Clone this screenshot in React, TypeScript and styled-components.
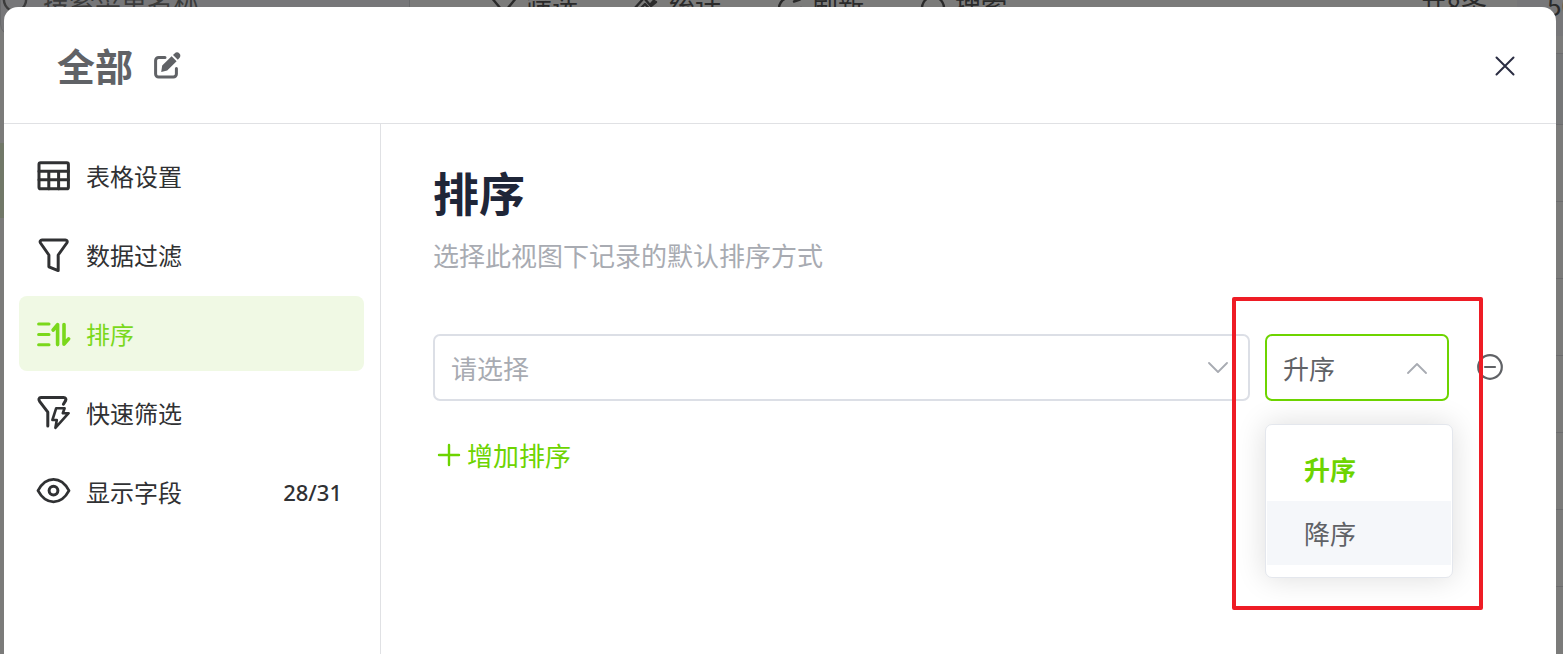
import React from "react";
import styled, { createGlobalStyle } from "styled-components";

const color = {
  green: "#6dd400",
  activeGreen: "#7ad81b",
  activeBg: "#f0f9e4",
  ink: "#303133",
  text: "#606266",
  heading: "#1f2638",
  muted: "#a8abb2",
  field: "#dcdfe6",
  line: "#e0e1e4",
};

const GlobalStyle = createGlobalStyle`
  * { box-sizing: border-box; }
  body {
    margin: 0;
    font-family: "Noto Sans CJK SC", sans-serif;
    color: ${color.text};
  }
  button, input, select { font: inherit; color: inherit; }
  button { padding: 0; border: 0; background: none; cursor: pointer; }
  h1, h2, p, ul { margin: 0; padding: 0; }
  ul { list-style: none; }
`;

const Screen = styled.div`
  position: relative;
  height: 100vh;
  overflow: hidden;
  background: #f7f6f5;
`;

/* The list page under the dialog, scrolled so that its toolbar is cut off */
const ListPage = styled.div`
  display: grid;
  grid-template-columns: 430px 1fr;
  margin-top: -36px;
  font-size: 26px;
`;

const MenuColumn = styled.aside`
  display: flex;
  flex-direction: column;
  padding-right: 20px;
`;

const SearchBox = styled.label`
  display: flex;
  align-items: center;
  gap: 14px;
  height: 72px;
  border: 1px solid #d0d2d6;
  border-radius: 12px;
  background: #eeeff2;
  color: #777;
  svg { flex: none; }
  input {
    flex: 1;
    min-width: 0;
    border: 0;
    padding: 0;
    background: none;
    &::placeholder { color: #777; opacity: 1; }
  }
`;

const CurrentMenu = styled.div`
  height: 75px;
  margin-top: 107px;
  background: #e2f1d0;
`;

const ListColumn = styled.div`
  min-width: 0;
`;

const Toolbar = styled.div`
  display: flex;
  align-items: center;
  height: 72px;
  margin-bottom: 17px;
  padding: 8px 0 0 60px;
  color: #555;
`;

const Tool = styled.button`
  display: flex;
  align-items: center;
  gap: 8px;
  width: 143px;
  svg { margin-top: 8px; }
`;

const Total = styled.span`
  margin-left: auto;
  margin-right: 30px;
`;

const PageSize = styled.button`
  width: 46px;
  height: 64px;
  padding-left: 30px;
  background: #eeeff2;
  text-align: left;
`;

const ListRow = styled.div<{ $head?: boolean }>`
  height: ${(p) => (p.$head ? 71 : 77)}px;
  border-top: 1px solid #d8d9dc;
  background: ${(p) => (p.$head ? "#eceef0" : "transparent")};
`;

const Overlay = styled.div`
  position: absolute;
  inset: 0;
  display: flex;
  padding: 7px 7px 0 4px;
  background: rgba(0, 0, 0, 0.5);
`;

const Dialog = styled.section`
  flex: 1;
  display: flex;
  flex-direction: column;
  min-width: 0;
  border-radius: 14px 14px 0 0;
  background: #fff;
`;

const Header = styled.header`
  display: flex;
  align-items: center;
  justify-content: space-between;
  height: 117px;
  padding: 0 39px 0 53px;
  border-bottom: 1px solid ${color.line};
`;

const TitleGroup = styled.div`
  display: flex;
  align-items: center;
  gap: 20px;
`;

const Title = styled.h1`
  font-size: 38px;
  line-height: 56px;
  font-weight: 700;
`;

const IconButton = styled.button`
  display: flex;
  flex: none;
`;

const Body = styled.div`
  flex: 1;
  display: flex;
`;

const Sidebar = styled.nav`
  flex: none;
  display: flex;
  flex-direction: column;
  gap: 4px;
  width: 377px;
  padding: 14px 16px 0 15px;
  border-right: 1px solid ${color.line};
`;

const NavItem = styled.button<{ $active?: boolean }>`
  display: flex;
  align-items: center;
  gap: 15px;
  height: 75px;
  padding: 0 22px 0 17px;
  border-radius: 8px;
  background: ${(p) => (p.$active ? color.activeBg : "transparent")};
  color: ${(p) => (p.$active ? color.activeGreen : color.ink)};
  font-size: 24px;
  line-height: 36px;
  svg { flex: none; }
`;

const Count = styled.span`
  margin-left: auto;
  font-family: "Noto Sans", "Noto Sans CJK SC", sans-serif;
  font-size: 22px;
  font-weight: 500;
`;

const Main = styled.main`
  flex: 1;
  min-width: 0;
  padding: 37px 53px 40px 52px;
  font-size: 26px;
`;

const Heading = styled.h2`
  color: ${color.heading};
  font-size: 46px;
  line-height: 60px;
  font-weight: 700;
`;

const Description = styled.p`
  margin-top: 16px;
  color: ${color.muted};
  line-height: 36px;
`;

const SortRow = styled.div`
  display: flex;
  align-items: center;
  margin-top: 61px;
`;

const Field = styled.div<{ $narrow?: boolean }>`
  position: relative;
  flex: ${(p) => (p.$narrow ? "0 0 184px" : "1 1 0")};
  margin-right: ${(p) => (p.$narrow ? 28 : 15)}px;
`;

const Select = styled.select<{ $open?: boolean }>`
  display: block;
  appearance: none;
  width: 100%;
  height: 67px;
  padding: 0 56px 0 16px;
  border: 2px solid ${(p) => (p.$open ? color.green : color.field)};
  border-radius: 7px;
  background: #fff;
  color: ${(p) => (p.$open ? color.text : color.muted)};
  outline: none;
`;

const Arrow = styled.svg<{ $up?: boolean }>`
  position: absolute;
  right: 22px;
  top: 28px;
  transform: ${(p) => (p.$up ? "rotate(180deg)" : "none")};
  pointer-events: none;
`;

const Options = styled.ul`
  position: absolute;
  top: 90px;
  left: 0;
  width: 188px;
  padding: 12px 1px;
  border: 1px solid #e4e7ed;
  border-radius: 7px;
  background: #fff;
  box-shadow: 0 0 30px rgba(0, 0, 0, 0.14);
`;

const Option = styled.li<{ $selected?: boolean }>`
  padding-left: 37px;
  line-height: 64px;
  background: ${(p) => (p.$selected ? "transparent" : "#f5f7fa")};
  color: ${(p) => (p.$selected ? color.green : color.text)};
  font-weight: ${(p) => (p.$selected ? 700 : 400)};
`;

const Highlight = styled.div`
  position: absolute;
  z-index: 1;
  top: -37px;
  left: -33px;
  width: 251px;
  height: 313px;
  border: 4px solid #ee1c25;
  border-radius: 2px;
  pointer-events: none;
`;

const AddButton = styled.button`
  display: flex;
  align-items: center;
  gap: 6px;
  margin-top: 34px;
  padding-left: 4px;
  color: ${color.green};
  line-height: 40px;
`;

const stroke = {
  fill: "none",
  stroke: "currentColor",
  strokeLinecap: "round" as const,
  strokeLinejoin: "round" as const,
  "aria-hidden": true,
};

const NavIcon = ({ children }: { children: React.ReactNode }) => (
  <svg width="35" height="36" viewBox="0 0 35 36" strokeWidth="3" {...stroke}>
    {children}
  </svg>
);

const ToolIcon = ({ d }: { d: string }) => (
  <svg width="28" height="28" viewBox="0 0 28 28" strokeWidth="2.4" {...stroke}>
    <path d={d} />
  </svg>
);

const circle = "M14 3a11 11 0 1 0 0.01 0";

const tools = [
  { label: "筛选", d: "M1 3h26L17 15v11l-6-3v-8z" },
  { label: "统计", d: "M1 15 11 4l6 7 6-7M6 16l6-6 8 9M18 12l5-4" },
  { label: "刷新", d: "M3 16A11 11 0 0 1 11 4M18 7.500l6-2M25 14a11 11 0 0 1-18 8" },
  { label: "搜索", d: circle },
];

const navItems = [
  {
    label: "表格设置",
    icon: (
      <>
        <rect x="3" y="4.8" width="29.4" height="26" rx="1.6" />
        <path d="M3 13.3h29.4M3 21.8h29.4M12.8 13.3V30.8M22.6 13.3V30.8" />
      </>
    ),
  },
  {
    label: "数据过滤",
    icon: (
      <path d="M6 3h23.4c1.6 0 2.3 1.6 1.4 3L22.200 18v15.600L12.900 29.800V18L4.500 6c-.9-1.4 0-3 1.500-3z" />
    ),
  },
  {
    label: "排序",
    active: true,
    icon: (
      <>
        <path d="M2.600 8h10.400M2.600 18.400h10.400M2.600 28.800h10.400" />
        <path
          strokeWidth="3.600"
          d="M17.200 14 21.600 8.600V28.600M28 8.600V28.200L32.600 22.800"
        />
      </>
    ),
  },
  {
    label: "快速筛选",
    icon: (
      <>
        <path d="M11.800 31V17.200L3.600 6.400c-1.400-1.900-.6-4 1.400-4h22.600c2 0 2.800 1.600 2 3.200L27.400 9.200" />
        <path
          strokeWidth="2.600"
          d="M20.200 13.200h8.400L26.800 18.200h5.800L19.400 32.800l1.400-7.800h-4.400z"
        />
      </>
    ),
  },
  {
    label: "显示字段",
    count: "28/31",
    icon: (
      <>
        <path
          strokeWidth="2.800"
          d="M2 16.600C6 9.200 11.400 5.400 17.500 5.400S29 9.200 33 16.600C29 24 23.600 27.800 17.500 27.800S6 24 2 16.600z"
        />
        <circle cx="17.500" cy="16.600" r="4.400" />
      </>
    ),
  },
];

const SelectArrow = ({ up }: { up?: boolean }) => (
  <Arrow
    $up={up}
    width="20"
    height="12"
    viewBox="0 0 20 12"
    strokeWidth="1.8"
    {...stroke}
    stroke={color.muted}
  >
    <path d="M1 1 10 10 19 1" />
  </Arrow>
);

export default function App() {
  return (
    <>
      <GlobalStyle />
      <Screen>
        <ListPage inert>
          <MenuColumn>
            <SearchBox>
              <ToolIcon d={circle} />
              <input aria-label="搜索菜单名称" placeholder="搜索菜单名称" />
            </SearchBox>
            <CurrentMenu />
          </MenuColumn>
          <ListColumn>
            <Toolbar>
              {tools.map((t) => (
                <Tool key={t.label}>
                  <ToolIcon d={t.d} />
                  {t.label}
                </Tool>
              ))}
              <Total>共8条</Total>
              <PageSize>50</PageSize>
            </Toolbar>
            <ListRow $head />
            {[1, 2, 3, 4, 5, 6, 7, 8].map((n) => (
              <ListRow key={n} />
            ))}
          </ListColumn>
        </ListPage>

        <Overlay>
          <Dialog role="dialog" aria-labelledby="view-title">
            <Header>
              <TitleGroup>
                <Title id="view-title">全部</Title>
                <IconButton aria-label="编辑">
                  <svg width="28" height="28" viewBox="0 0 28 28" aria-hidden>
                    <path
                      d="M12 6.400H5.600A3 3 0 0 0 2.600 9.400V23A3 3 0 0 0 5.600 26H20.400A3 3 0 0 0 23.400 23V17.400"
                      fill="none"
                      stroke="currentColor"
                      strokeWidth="3"
                      strokeLinecap="round"
                    />
                    <path
                      d="M8.200 21 9.200 14.600 18.600 5.200 23.600 10.200 14.200 19.600zM20 4 21.600 2.400C23 1 25 1 26.400 2.400S27.600 5.600 26.400 7L24.800 8.800z"
                      fill="currentColor"
                    />
                  </svg>
                </IconButton>
              </TitleGroup>
              <IconButton aria-label="关闭">
                <svg
                  width="24"
                  height="24"
                  viewBox="0 0 24 24"
                  strokeWidth="2"
                  {...stroke}
                  stroke="#2a2d42"
                >
                  <path d="M3.500 4.500 20.500 21.500M20.500 4.500 3.500 21.500" />
                </svg>
              </IconButton>
            </Header>

            <Body>
              <Sidebar>
                {navItems.map((item) => (
                  <NavItem
                    key={item.label}
                    $active={item.active}
                    aria-current={item.active ? "page" : undefined}
                  >
                    <NavIcon>{item.icon}</NavIcon>
                    {item.label}
                    {item.count && <Count>{item.count}</Count>}
                  </NavItem>
                ))}
              </Sidebar>

              <Main>
                <Heading>排序</Heading>
                <Description>选择此视图下记录的默认排序方式</Description>

                <SortRow>
                  <Field>
                    <Select aria-label="排序字段" defaultValue="">
                      <option value="">请选择</option>
                    </Select>
                    <SelectArrow />
                  </Field>
                  <Field $narrow>
                    <Select $open aria-label="排序方式" defaultValue="asc">
                      <option value="asc">升序</option>
                      <option value="desc">降序</option>
                    </Select>
                    <SelectArrow up />
                    <Options role="listbox" aria-label="排序方式">
                      <Option role="option" aria-selected $selected>
                        升序
                      </Option>
                      <Option role="option" aria-selected={false}>
                        降序
                      </Option>
                    </Options>
                    <Highlight />
                  </Field>
                  <IconButton aria-label="删除排序">
                    <svg
                      width="26"
                      height="28"
                      viewBox="0 0 26 28"
                      strokeWidth="2.2"
                      {...stroke}
                    >
                      <circle cx="13" cy="13" r="11.800" />
                      <path d="M8 13h10" />
                    </svg>
                  </IconButton>
                </SortRow>

                <AddButton>
                  <svg
                    width="24"
                    height="24"
                    viewBox="0 0 24 24"
                    strokeWidth="2.4"
                    {...stroke}
                  >
                    <path d="M2 12h20M12 2v20" />
                  </svg>
                  增加排序
                </AddButton>
              </Main>
            </Body>
          </Dialog>
        </Overlay>
      </Screen>
    </>
  );
}
